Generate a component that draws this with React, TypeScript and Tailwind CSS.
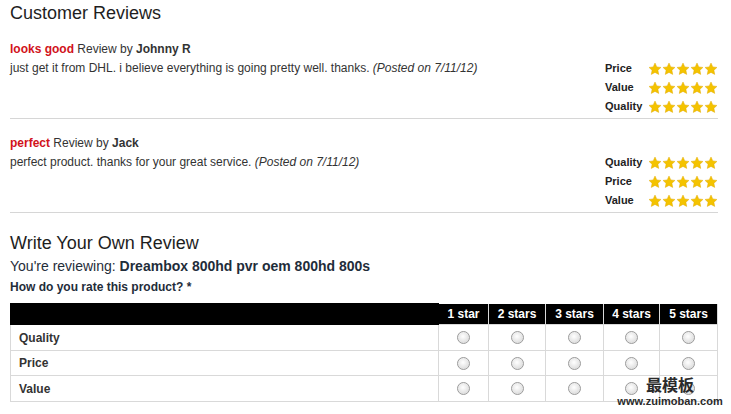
import React from "react";

const reviews = [
  {
    title: "looks good",
    author: "Johnny R",
    body: "just get it from DHL. i believe everything is going pretty well. thanks.",
    date: "7/11/12",
    ratings: ["Price", "Value", "Quality"],
  },
  {
    title: "perfect",
    author: "Jack",
    body: "perfect product. thanks for your great service.",
    date: "7/11/12",
    ratings: ["Quality", "Price", "Value"],
  },
];

const columns = [
  { label: "1 star", w: "w-[50px]" },
  { label: "2 stars", w: "w-[57px]" },
  { label: "3 stars", w: "w-[58px]" },
  { label: "4 stars", w: "w-[56px]" },
  { label: "5 stars", w: "w-[58px]" },
];

function Star() {
  return (
    <svg viewBox="0 0 24 24" className="h-[14px] w-[14px] shrink-0">
      <path
        d="M12 1.8l3.1 6.6 7.1.9-5.2 4.9 1.4 7.1L12 17.8l-6.4 3.5 1.4-7.1-5.2-4.9 7.1-.9z"
        fill="#f4c300"
        stroke="#e0a800"
        strokeWidth="0.8"
        strokeLinejoin="round"
      />
    </svg>
  );
}

function Radio() {
  return (
    <span className="inline-block h-[13px] w-[13px] rounded-full border border-[#9c9c9c] bg-[radial-gradient(circle_at_45%_40%,#ffffff_0%,#e6e6e6_55%,#c9c9c9_100%)] shadow-[inset_0_0_1px_#fff]" />
  );
}

export default function App() {
  return (
    <div className="relative h-[414px] w-[731px] overflow-hidden bg-white pl-[10px] pt-px font-['Liberation_Sans',Arial,sans-serif] text-[#333]">
      <div className="w-[708px]">
        <h2 className="text-[18px] leading-[24px] text-[#1e1e1e]">Customer Reviews</h2>

        {/* Reviews */}
        {reviews.map((r) => (
          <div key={r.title} className="flex border-b border-[#d6d6d6] pb-[2px] pt-[15px]">
            <div className="flex-1 text-[12px] leading-[19px]">
              <div>
                <span className="font-bold text-[#d1121b]">{r.title}</span> Review by{" "}
                <span className="font-bold">{r.author}</span>
              </div>
              <div>
                {r.body} <i>(Posted on {r.date})</i>
              </div>
            </div>
            <div className="mt-[19px] w-[113px]">
              {r.ratings.map((name) => (
                <div key={name} className="flex h-[19px] items-center">
                  <span className="w-[45px] text-[11px] font-bold text-[#222]">{name}</span>
                  <div className="flex">
                    {[0, 1, 2, 3, 4].map((i) => (
                      <Star key={i} />
                    ))}
                  </div>
                </div>
              ))}
            </div>
          </div>
        ))}

        {/* Write review */}
        <h2 className="mt-[18px] text-[18px] leading-[24px] text-[#1e1e1e]">Write Your Own Review</h2>
        <p className="mt-[2px] text-[14px] leading-[18px] text-[#1f2d3a]">
          You're reviewing: <span className="font-bold">Dreambox 800hd pvr oem 800hd 800s</span>
        </p>
        <p className="mt-[4px] text-[12px] font-bold leading-[16px] text-[#1f2d3a]">
          How do you rate this product? *
        </p>

        <table className="mt-[8px] w-[708px] border-collapse text-[12px]">
          <thead>
            <tr className="h-[21px] bg-black text-white">
              <th className="border border-black" />
              {columns.map((c) => (
                <th key={c.label} className={`${c.w} border-x border-[#d9d9d9] border-y-black font-bold`}>
                  {c.label}
                </th>
              ))}
            </tr>
          </thead>
          <tbody>
            {["Quality", "Price", "Value"].map((row, ri) => (
              <tr key={row} className={ri === 1 ? "h-[25px]" : "h-[26px]"}>
                <th className="border border-[#d9d9d9] pl-[8px] text-left font-bold text-[#333]">{row}</th>
                {columns.map((c) => (
                  <td key={c.label} className="border border-[#d9d9d9] text-center align-middle">
                    <div className="flex items-center justify-center">
                      <Radio />
                    </div>
                  </td>
                ))}
              </tr>
            ))}
          </tbody>
        </table>
      </div>

      {/* Watermark */}
      <div className="absolute left-[620px] top-[376px] flex w-[100px] flex-col items-center leading-none text-[#2a2a2a]">
        <span className="font-['Noto_Sans_CJK_SC',serif] text-[16px] font-bold">最模板</span>
        <span className="mt-[4px] text-[11px] font-bold">www.zuimoban.com</span>
      </div>
    </div>
  );
}
